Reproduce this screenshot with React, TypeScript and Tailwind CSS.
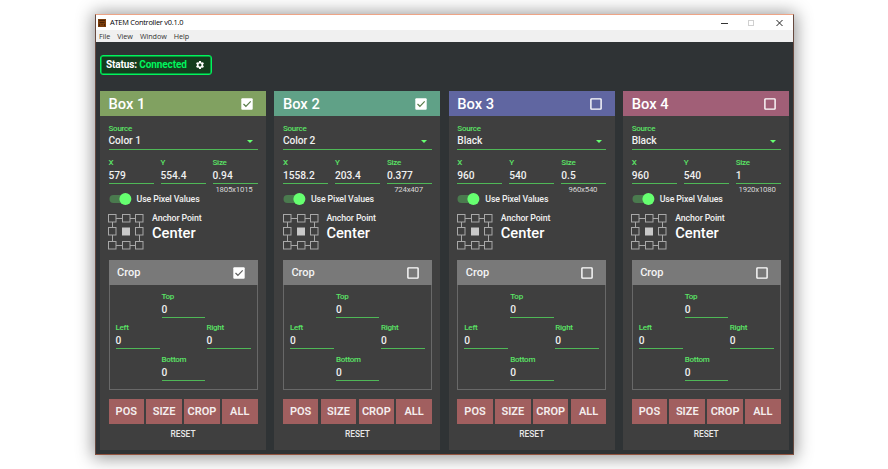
import React from "react";

type Box = {
  name: string;
  head: string;
  on: boolean;
  source: string;
  x: string;
  y: string;
  size: string;
  hint: string;
  hintPad: string;
  crop: boolean;
};

const boxes: Box[] = [
  { name: "Box 1", head: "bg-[#81a161]", on: true, source: "Color 1", x: "579", y: "554.4", size: "0.94", hint: "1805x1015", hintPad: "pr-[5px]", crop: true },
  { name: "Box 2", head: "bg-[#60a187]", on: true, source: "Color 2", x: "1558.2", y: "203.4", size: "0.377", hint: "724x407", hintPad: "pr-[9px]", crop: false },
  { name: "Box 3", head: "bg-[#6066a1]", on: false, source: "Black", x: "960", y: "540", size: "0.5", hint: "960x540", hintPad: "pr-[9px]", crop: false },
  { name: "Box 4", head: "bg-[#a15f77]", on: false, source: "Black", x: "960", y: "540", size: "1", hint: "1920x1080", hintPad: "pr-[5px]", crop: false },
];

function Check({ on, tick }: { on: boolean; tick: string }) {
  return (
    <svg width="12" height="12" viewBox="0 0 12 12" fill="none">
      {on ? (
        <>
          <rect x="0.3" y="0.3" width="11.4" height="11.4" rx="1" fill="#fff" />
          <path d="M2.5 6 L4.9 8.3 L9.7 3.4" stroke={tick} strokeWidth="1.2" />
        </>
      ) : (
        <rect x="0.9" y="0.9" width="10.2" height="10.2" rx="0.6" stroke="#fff" strokeWidth="1.4" />
      )}
    </svg>
  );
}

function Field({ label, value, className }: { label: string; value: string; className: string }) {
  return (
    <div className={className}>
      <div className="h-[10px] text-[8px] font-medium leading-[10px] tracking-[-0.25px] text-[#5be566]">{label}</div>
      <div className="flex h-[16px] items-start border-b border-[#4fb857] text-[10.2px] font-medium leading-[15px] text-[#f0f0f0]">{value}</div>
    </div>
  );
}

function Anchor() {
  return (
    <svg width="36" height="36" viewBox="-2 -2 36 36" fill="none" stroke="#a8a8a8" strokeWidth="1">
      <rect x="2.5" y="2.5" width="27" height="27" />
      {[-1.5, 11.5, 25.5].map((y, r) =>
        [-1.5, 12.5, 25.5].map((x, c) =>
          r === 1 && c === 1 ? (
            <rect key="center" x="12" y="11.5" width="8" height="8" fill="#c8c8c8" stroke="none" />
          ) : (
            <rect key={`${r}-${c}`} x={x} y={y} width="7.5" height="7.5" fill="#3f3f3f" />
          )
        )
      )}
    </svg>
  );
}

function BoxCard({ box }: { box: Box }) {
  return (
    <section className="h-[359px] w-[166px] shrink-0 bg-[#3f3f3f]">
      <header className={`flex h-[25px] items-center justify-between pl-[8.5px] pr-[13px] ${box.head}`}>
        <span className="text-[14.7px] font-medium leading-[26px]">{box.name}</span>
        <Check on={box.on} tick="#587c48" />
      </header>
      <div className="px-[8.5px] pt-[7px]">
        <div className="h-[10px] text-[8px] font-medium leading-[11px] tracking-[-0.25px] text-[#5be566]">Source</div>
        <div className="flex h-[17px] items-start justify-between border-b border-[#4fb857] pr-[4.5px] text-[10.2px] font-medium leading-[16px] tracking-[-0.05px] text-[#f0f0f0]">
          <span>{box.source}</span>
          <svg className="mt-[7px]" width="6" height="3" viewBox="0 0 6 3" fill="#66ff70"><path d="M0 0h6L3 3z" /></svg>
        </div>
        <div className="flex justify-between pt-[8px]">
          <Field label="X" value={box.x} className="w-[45px]" />
          <Field label="Y" value={box.y} className="w-[45px]" />
          <Field label="Size" value={box.size} className="w-[45px]" />
        </div>
        <div className={`h-[9px] text-right text-[7.8px] leading-[12px] tracking-[-0.2px] text-[#d8d8d8] ${box.hintPad}`}>{box.hint}</div>
        <div className="flex h-[12px] items-center">
          <svg width="23" height="12" viewBox="0 0 23 12">
            <rect x="0.5" y="2" width="20" height="8" rx="4" fill="#4a7a4e" />
            <circle cx="16.4" cy="6" r="6" fill="#66ff70" />
          </svg>
          <span className="ml-[5px] text-[8.8px] font-medium leading-[12px] tracking-[-0.13px] text-[#f0f0f0]">Use Pixel Values</span>
        </div>
        <div className="mt-[9px] flex h-[36px]">
          <div className="-ml-[0.3px]"><Anchor /></div>
          <div className="ml-[7.8px]">
            <div className="h-[9px] text-[8.8px] font-medium leading-[9px] tracking-[-0.13px] text-[#f0f0f0]">Anchor Point</div>
            <div className="text-[14.7px] font-medium leading-[20px]">Center</div>
          </div>
        </div>
        <div className="mt-[10px] h-[130px] border border-[#686868]">
          <div className="-mx-px -mt-px flex h-[25px] items-center justify-between bg-[#797979] pl-[8.5px] pr-[13px]">
            <span className="text-[11px] font-medium leading-[25px] text-[#f4f4f4]">Crop</span>
            <Check on={box.crop} tick="#606060" />
          </div>
          <div className="flex flex-col px-[6px] pt-[7px]">
            <Field label="Top" value="0" className="ml-[46px] w-[43.5px]" />
            <div className="mt-[5px] flex justify-between">
              <Field label="Left" value="0" className="w-[44px]" />
              <Field label="Right" value="0" className="w-[44px]" />
            </div>
            <Field label="Bottom" value="0" className="ml-[46px] mt-[6px] w-[43.5px]" />
          </div>
        </div>
        <div className="mt-[9px] grid h-[25px] grid-cols-4 gap-[2.3px]">
          {["POS", "SIZE", "CROP", "ALL"].map((t) => (
            <button key={t} className="flex justify-center whitespace-nowrap bg-[#a15f5f] text-[11px] font-semibold leading-[25px] text-[#f4eeee]">{t}</button>
          ))}
        </div>
        <div className="mt-[4px] text-center text-[8.4px] font-medium leading-[12px] text-[#e8e8e8]">RESET</div>
      </div>
    </section>
  );
}

export default function App() {
  return (
    <div className="h-[469px] w-[888px] overflow-hidden bg-white pl-[95px] pt-[14px] font-['Roboto',sans-serif] text-white">
      <div className="flex h-[441px] w-[699px] flex-col border-x border-b border-t border-x-[#66493f] border-b-[#925440] border-t-[#eda486] bg-[#2f3335] shadow-[0_1px_16px_2px_rgba(0,0,0,0.42)]">
        <div className="flex h-[15px] shrink-0 items-center bg-white pl-[2px] text-black">
          <svg width="8" height="8" viewBox="0 0 8 8">
            <rect width="8" height="8" fill="#7a3d0c" />
            <path d="M1 1.5h6M1.5 3.5h5M1.5 5v2M4 5v1M6.5 5v2" stroke="#3d1e08" strokeWidth="0.8" />
          </svg>
          <span className="ml-[4px] font-['Open_Sans',sans-serif] text-[7.4px] leading-[15px] tracking-[-0.23px]">ATEM Controller v0.1.0</span>
          <svg className="ml-auto mr-[9px]" width="64" height="8" viewBox="0 0 64 8" fill="none">
            <path d="M1 4.5h7" stroke="#333" />
            <rect x="28.5" y="1.5" width="5" height="5" stroke="#d0d0d0" />
            <path d="M56.5 1l6 6m0-6l-6 6" stroke="#222" />
          </svg>
        </div>
        <div className="flex h-[12px] shrink-0 items-center gap-[7.2px] bg-[#f0f0f0] pl-[3px] font-['Open_Sans',sans-serif] text-[7.2px] leading-[13px] tracking-[-0.07px] text-[#333]">
          <span>File</span><span>View</span><span>Window</span><span>Help</span>
        </div>
        <div className="px-[4px] pt-[12.5px]">
          <div className="flex h-[20px] w-[111.5px] items-center justify-between rounded-[3px] border border-[#00f45c] bg-[#143d1e] pl-[5px] pr-[5.5px] text-[10px] font-bold leading-[18px] tracking-[-0.12px] shadow-[inset_0_0_0_0.5px_#00f45c]">
            <span>Status: <span className="text-[#00f45c]">Connected</span></span>
            <svg width="10" height="10" viewBox="0 0 24 24" fill="#fff">
              <path d="M19.14 12.94c.04-.3.06-.61.06-.94 0-.32-.02-.64-.07-.94l2.03-1.58c.18-.14.23-.41.12-.61l-1.92-3.32c-.12-.22-.37-.29-.59-.22l-2.39.96c-.5-.38-1.03-.7-1.62-.94l-.36-2.54c-.04-.24-.24-.41-.48-.41h-3.84c-.24 0-.43.17-.47.41l-.36 2.54c-.59.24-1.13.57-1.62.94l-2.39-.96c-.22-.08-.47 0-.59.22L2.74 8.87c-.12.21-.08.47.12.61l2.03 1.58c-.05.3-.09.63-.09.94s.02.64.07.94l-2.03 1.58c-.18.14-.23.41-.12.61l1.92 3.32c.12.22.37.29.59.22l2.39-.96c.5.38 1.03.7 1.62.94l.36 2.54c.05.24.24.41.48.41h3.84c.24 0 .44-.17.47-.41l.36-2.54c.59-.24 1.13-.56 1.62-.94l2.39.96c.22.08.47 0 .59-.22l1.92-3.32c.12-.22.07-.47-.12-.61l-2.01-1.58zM12 15.6c-1.98 0-3.6-1.62-3.6-3.6s1.62-3.6 3.6-3.6 3.6 1.62 3.6 3.6-1.62 3.6-3.6 3.6z" />
            </svg>
          </div>
          <main className="mt-[16.5px] flex gap-[8.4px]">
            {boxes.map((b) => <BoxCard key={b.name} box={b} />)}
          </main>
        </div>
      </div>
    </div>
  );
}
